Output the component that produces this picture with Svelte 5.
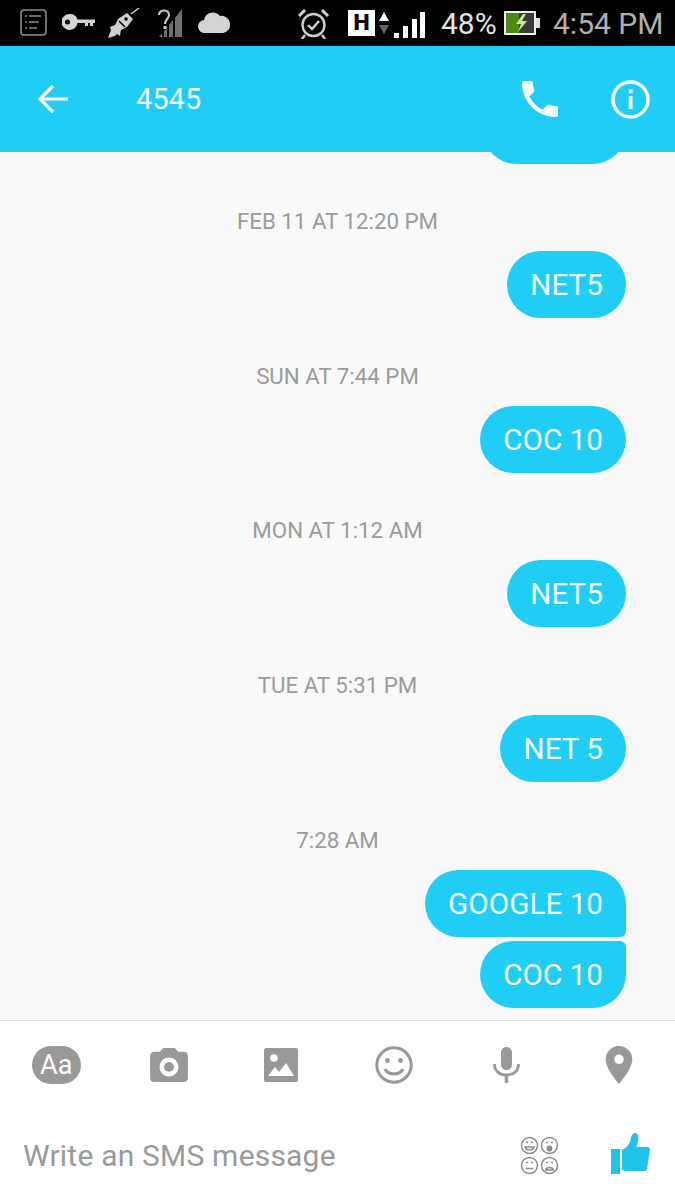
<script>
    const groups = [
        { time: "FEB 11 AT 12:20 PM", texts: ["NET5"] },
        { time: "SUN AT 7:44 PM", texts: ["COC 10"] },
        { time: "MON AT 1:12 AM", texts: ["NET5"] },
        { time: "TUE AT 5:31 PM", texts: ["NET 5"] },
        { time: "7:28 AM", texts: ["GOOGLE 10", "COC 10"] }
    ];
</script>

<div class="root">
    <!-- status bar -->
    <div class="status">
        <svg class="s-list" viewBox="0 0 27 27" fill="none" stroke="#8a8a8a">
            <rect x="1" y="1" width="25" height="25" rx="3" stroke-width="1.6" />
            <path d="M9 7h12M9 13h10M9 19h8M5 7h2M5 13h2M5 19h2" stroke-width="1.6" />
        </svg>
        <svg class="s-key" viewBox="0 0 33 16" fill="#d4d4d4">
            <path d="M8 0a8 8 0 0 1 7.5 5.5H33V9h-2v3h-3V9h-2v3h-3V9h-7.500A8 8 0 1 1 8 0z" />
            <circle cx="5.500" cy="8" r="2.500" fill="#000" />
        </svg>
        <svg class="s-rocket" viewBox="0 0 32 30" fill="#d0d0d0">
            <path d="M0 30l3-8-1-3 5-2 3-6 9-6 6 6-6 8-6 3-1 6-3-2-2 2z" />
            <path d="M23 6l8-6" stroke="#d0d0d0" stroke-width="1.500" />
            <path d="M11 13l6 6" stroke="#000" stroke-width="1.500" />
            <circle cx="18" cy="11" r="1.800" fill="#000" />
        </svg>
        <svg class="s-nosignal" viewBox="0 0 25 28">
            <path d="M1 6c0-6 10-6 10 0 0 4-4 4-4 9" fill="none" stroke="#c8c8c8" stroke-width="2.200" />
            <rect x="5.500" y="17" width="3" height="3" fill="#c8c8c8" />
            <path d="M1 28l3-4v4zM6 28v-6l3-3v9zM11 28V16l4-5v17zM17 28V9l7-9v28z" fill="#6f6f6f" />
        </svg>
        <svg class="s-cloud" viewBox="0 0 32 21" fill="#d4d4d4">
            <path d="M7 21a6.500 6.500 0 0 1-1-13A9 9 0 0 1 22 4a7 7 0 0 1 3 17z" />
        </svg>
        <svg class="s-alarm" viewBox="0 0 31 30" fill="none" stroke="#d0d0d0">
            <circle cx="15.500" cy="16" r="11" stroke-width="2.400" />
            <path d="M10 16l4 4 7-8" stroke-width="2.400" />
            <path d="M1 7l6-6M30 7l-6-6" stroke-width="3" />
            <path d="M7 26l-3 4M24 26l3 4" stroke-width="2.400" />
        </svg>
        <span class="h-box">H</span>
        <svg class="s-arrows" viewBox="0 0 10 22">
            <path d="M5 0l5 9H0z" fill="#fff" />
            <path d="M0 13h10l-5 9z" fill="#666" />
        </svg>
        <svg class="s-bars" viewBox="0 0 31 26" fill="#fff">
            <rect x="0" y="21" width="5" height="5" />
            <rect x="9" y="14" width="5" height="12" />
            <rect x="18" y="7" width="5" height="19" />
            <rect x="26" y="0" width="5" height="26" />
        </svg>
        <span class="pct">48%</span>
        <svg class="s-batt" viewBox="0 0 36 24">
            <rect x="0" y="0" width="32" height="24" fill="#eee" />
            <rect x="2" y="2" width="13" height="20" fill="#4c8a12" />
            <rect x="15" y="2" width="15" height="20" fill="#3a3a3a" />
            <rect x="32" y="7" width="4" height="10" fill="#ddd" />
            <path d="M19 3l-7 10h5l-3 8 9-11h-5l4-7z" fill="#c9e88e" />
        </svg>
        <span class="clock">4:54 PM</span>
    </div>

    <!-- header -->
    <div class="header">
        <svg class="back" viewBox="0 0 30 30" fill="none" stroke="#fff" stroke-width="3.200">
            <path d="M30 15H3M15 2L2 15l13 13" />
        </svg>
        <div class="title">4545</div>
        <svg class="phone" viewBox="3 3 18 18" fill="#fff">
            <path d="M6.62 10.79c1.44 2.83 3.76 5.14 6.59 6.59l2.2-2.2c.27-.27.67-.36 1.02-.24 1.12.37 2.33.57 3.57.57.55 0 1 .45 1 1V20c0 .55-.45 1-1 1-9.39 0-17-7.61-17-17 0-.55.45-1 1-1h3.5c.55 0 1 .45 1 1 0 1.25.2 2.45.57 3.57.11.35.03.74-.25 1.02l-2.2 2.2z" />
        </svg>
        <svg class="info" viewBox="0 0 39 39">
            <circle cx="19.500" cy="19.500" r="17.500" fill="none" stroke="#fff" stroke-width="3.500" />
            <rect x="17.700" y="16" width="3.800" height="13" fill="#fff" />
            <rect x="17.700" y="9.500" width="3.800" height="3.800" fill="#fff" />
        </svg>
    </div>

    <!-- messages -->
    <div class="messages">
        <div class="bubble cut"></div>

        {#each groups as g}
            <div class="group">
                <div class="time">{g.time}</div>
                {#each g.texts as t, i}
                    <div
                        class="bubble"
                        class:first={g.texts.length > 1 && i === 0}
                        class:last={g.texts.length > 1 && i === g.texts.length - 1}
                    >
                        {t}
                    </div>
                {/each}
            </div>
        {/each}
    </div>

    <!-- composer -->
    <div class="composer">
        <div class="tools">
            <div class="tool"><span class="aa">Aa</span></div>
            <div class="tool">
                <svg class="camera" viewBox="2 2 20 18" fill="#999">
                    <circle cx="12" cy="12" r="2.600" />
                    <path d="M9 2L7.170 4H4c-1.100 0-2 .9-2 2v12c0 1.100.9 2 2 2h16c1.100 0 2-.9 2-2V6c0-1.100-.9-2-2-2h-3.170L15 2H9zm3 15c-2.760 0-5-2.240-5-5s2.240-5 5-5 5 2.240 5 5-2.240 5-5 5z" />
                </svg>
            </div>
            <div class="tool">
                <svg class="image" viewBox="0 0 34 34">
                    <rect width="34" height="34" rx="2" fill="#999" />
                    <circle cx="10" cy="10" r="3.800" fill="#fff" />
                    <path d="M4 28l7-9 4 5 7-9 8 13z" fill="#fff" />
                </svg>
            </div>
            <div class="tool">
                <svg class="smile" viewBox="0 0 38 38" fill="none" stroke="#999">
                    <circle cx="19" cy="19" r="17.200" stroke-width="3" />
                    <circle cx="12.500" cy="14.500" r="2.400" fill="#999" stroke="none" />
                    <circle cx="25.500" cy="14.500" r="2.400" fill="#999" stroke="none" />
                    <path d="M10 23c3 6.500 15 6.500 18 0" stroke-width="3" />
                </svg>
            </div>
            <div class="tool">
                <svg class="mic" viewBox="0 0 27 36" fill="none" stroke="#999">
                    <rect x="8" y="0" width="11" height="23" rx="5.500" fill="#999" stroke="none" />
                    <path d="M1.500 17c0 7 5 11 12 11s12-4 12-11" stroke-width="2.800" />
                    <path d="M13.500 27v9" stroke-width="3.500" />
                </svg>
            </div>
            <div class="tool">
                <svg class="pin" viewBox="5 2 14 20" fill="#999">
                    <path d="M12 2C8.130 2 5 5.130 5 9c0 5.250 7 13 7 13s7-7.750 7-13c0-3.870-3.130-7-7-7zm0 9.500a2.500 2.500 0 1 1 0-5 2.500 2.500 0 0 1 0 5z" />
                </svg>
            </div>
        </div>

        <div class="input-row">
            <div class="placeholder">Write an SMS message</div>
            <svg class="faces" viewBox="0 0 39 39" fill="none" stroke="#8c8c8c" stroke-width="1.500">
                <circle cx="9.500" cy="9.500" r="8" />
                <path d="M5 11h9c-1 4-8 4-9 0zM6 6.500h2M11 6.500h2" />
                <circle cx="29.500" cy="9.500" r="8" />
                <path d="M26 6.500h2M31 6.500h2" />
                <circle cx="29.500" cy="12.500" r="2.200" fill="#8c8c8c" />
                <circle cx="9.500" cy="29.500" r="8" />
                <path d="M6 26.500h2M11 26.500h2M5.500 32.500h8" />
                <circle cx="29.500" cy="29.500" r="8" />
                <path d="M26 26.500h2M31 26.500h2M25.500 34c1-3.500 7-3.500 8 0z" />
            </svg>
            <svg class="thumb" viewBox="0 0 39 41" fill="#20c4ea">
                <rect x="0" y="16" width="9" height="25" />
                <path d="M11 17c5-2 8-7 9-12 .5-3 2-5 4-5 3 0 4 4 3 8l-1.500 6H36c2.500 0 3 1.500 3 3l-3 19c-.4 1.300-1.500 2-3 2H15c-2 0-4-1-4-2z" />
            </svg>
        </div>
    </div>
</div>

<style>
:global(body) {
    margin: 0;
}

.root {
    width: 675px;
    height: 1200px;
    display: flex;
    flex-direction: column;
    overflow: hidden;
    font-family: Roboto, "Liberation Sans", sans-serif;
    background: #f9f9f9;
}

.status {
    position: relative;
    z-index: 1;
    height: 46px;
    flex: none;
    background: #000;
    display: flex;
    align-items: center;
    padding-left: 20px;
    box-sizing: border-box;
}

.status svg {
    flex: none;
    display: block;
}

.s-list { width: 27px; height: 27px; margin-top: -1px; }
.s-key { width: 33px; height: 16px; margin-left: 15px; margin-top: -2px; }
.s-rocket { width: 32px; height: 30px; margin-left: 13px; }
.s-nosignal { width: 25px; height: 28px; margin-left: 18px; }
.s-cloud { width: 32px; height: 21px; margin-left: 15px; margin-top: -2px; }
.s-alarm { width: 31px; height: 30px; margin-left: 68px; margin-top: 2px; }

.h-box {
    width: 27px;
    height: 26px;
    margin-left: 19px;
    background: #fff;
    color: #000;
    font: 700 21px/26px "DejaVu Sans", sans-serif;
    text-align: center;
}

.s-arrows { width: 10px; height: 22px; margin-left: 4px; }
.s-bars { width: 31px; height: 26px; margin-left: 5px; margin-top: 4px; }

.pct {
    margin-left: 16px;
    width: 55px;
    color: #e4e4e4;
    font-size: 30px;
    white-space: nowrap;
}

.s-batt { width: 36px; height: 24px; margin-left: 8px; }

.clock {
    margin-left: 13px;
    color: #b0b0b0;
    font-size: 30px;
    white-space: nowrap;
}

.header {
    position: relative;
    z-index: 1;
    height: 106px;
    flex: none;
    background: #20cef5;
    display: flex;
    align-items: center;
    padding-left: 38px;
    box-sizing: border-box;
}

.back { width: 30px; height: 30px; }

.title {
    margin-left: 68px;
    flex: 1;
    color: #f2fdff;
    font-size: 29px;
}

.phone { width: 36px; height: 36px; }

.info {
    width: 39px;
    height: 39px;
    margin-left: 53px;
    margin-right: 25px;
}

.messages {
    flex: 1;
    min-height: 0;
    overflow: hidden;
    display: flex;
    flex-direction: column;
    align-items: flex-end;
}

.group {
    display: flex;
    flex-direction: column;
    align-items: flex-end;
    width: 100%;
    margin-top: 42.67px;
}

.cut + .group {
    margin-top: 42px;
}

.time {
    align-self: stretch;
    height: 30px;
    margin-bottom: 15px;
    line-height: 30px;
    text-align: center;
    color: #9b9b9b;
    font-size: 22.3px;
}

.bubble {
    height: 67px;
    line-height: 67px;
    padding: 0 23px;
    margin-right: 49px;
    border-radius: 33.5px;
    background: #20cef5;
    color: #f2fdff;
    font-size: 29.7px;
    white-space: nowrap;
    flex: none;
}

.cut {
    margin-top: -55px;
    width: 97px;
}

.first {
    border-bottom-right-radius: 6px;
    margin-bottom: 4px;
}

.last {
    border-top-right-radius: 6px;
}

.composer {
    flex: none;
    height: 180px;
    background: #fff;
    border-top: 1px solid #dcdcdc;
    box-sizing: border-box;
}

.tools {
    height: 87px;
    display: grid;
    grid-template-columns: repeat(6, 1fr);
}

.tool {
    display: flex;
    align-items: center;
    justify-content: center;
}

.aa {
    width: 49px;
    height: 38px;
    border-radius: 19px;
    background: #999;
    color: #fff;
    font-size: 27px;
    line-height: 38px;
    text-align: center;
}

.camera { width: 38px; height: 34px; }
.image { width: 34px; height: 34px; }
.smile { width: 38px; height: 38px; }
.mic { width: 27px; height: 36px; }
.pin { width: 28px; height: 38px; }

.input-row {
    height: 92px;
    display: flex;
    align-items: center;
    padding: 2px 25px 0 23px;
    box-sizing: border-box;
}

.placeholder {
    flex: 1;
    color: #9a9a9a;
    font-size: 30px;
    letter-spacing: 0.2px;
}

.faces { width: 39px; height: 39px; }

.thumb {
    width: 39px;
    height: 41px;
    margin-left: 52px;
    margin-top: -4px;
}
</style>
